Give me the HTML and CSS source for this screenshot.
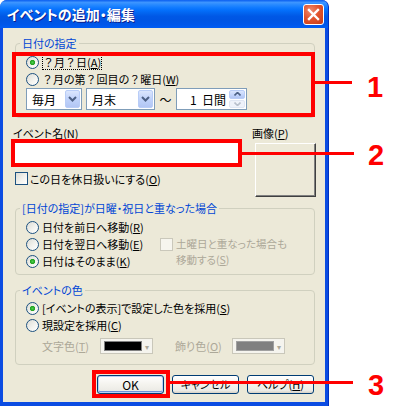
FILE: index.html
```html
<!DOCTYPE html>
<html lang="ja">
  <head>
    <meta charset="UTF-8" />
    <meta name="viewport" content="width=device-width, initial-scale=1.0" />
    <title>イベントの追加・編集</title>
    <link rel="stylesheet" href="styles.css">
  </head>
  <body>
    <div class="screen">
      <div class="window">
        <div class="titlebar">
          <span class="title">イベントの追加・編集</span>
          <span class="close">
            <svg width="21" height="21" viewBox="0 0 21 21">
              <path d="M6 6 L15 15 M15 6 L6 15" stroke="#fff" stroke-width="2.4" stroke-linecap="square" />
            </svg>
          </span>
        </div>

        <div class="client">
          <fieldset class="group g-date">
            <legend>日付の指定</legend>
            <div class="gbody">
              <div class="opt"><span class="radio on"></span><span class="focus"><span class="q">？</span>月<span class="q">？</span>日(<u>A</u>)</span></div>
              <div class="opt"><span class="radio"></span><span class="q">？</span>月の第<span class="q">？</span>回目の<span class="q">？</span>曜日(<u>W</u>)</div>
              <div class="combo-row">
                <div class="combo c-month">
                  <span>毎月</span>
                  <span class="drop">
                    <svg width="9" height="6" viewBox="0 0 9 6"><path d="M1 1 L4.5 4.5 L8 1" fill="none" stroke="#4d6185" stroke-width="2" /></svg>
                  </span>
                </div>
                <div class="combo c-day">
                  <span>月末</span>
                  <span class="drop">
                    <svg width="9" height="6" viewBox="0 0 9 6"><path d="M1 1 L4.5 4.5 L8 1" fill="none" stroke="#4d6185" stroke-width="2" /></svg>
                  </span>
                </div>
                <span class="tilde">～</span>
                <div class="spin">
                  <span class="spin-val">1&nbsp;&nbsp;日間</span>
                  <span class="spin-btns">
                    <span class="sb up"><svg width="7" height="4" viewBox="0 0 7 4"><path d="M0.5 3.5 L3.5 0.5 L6.5 3.5" fill="none" stroke="#4d6185" stroke-width="1.6" /></svg></span>
                    <span class="sb down"><svg width="7" height="4" viewBox="0 0 7 4"><path d="M0.5 0.5 L3.5 3.5 L6.5 0.5" fill="none" stroke="#b8c0cc" stroke-width="1.6" /></svg></span>
                  </span>
                </div>
              </div>
            </div>
          </fieldset>

          <div class="name-row">
            <div class="name-col">
              <div class="lbl">イベント名(<u>N</u>)</div>
              <div class="textbox"></div>
              <div class="chk"><span class="box"></span>この日を休日扱いにする(<u>O</u>)</div>
            </div>
            <div class="pic-col">
              <div class="lbl">画像(<u>P</u>)</div>
              <div class="picbtn"></div>
            </div>
          </div>

          <fieldset class="group g-holiday">
            <legend>[日付の指定]が日曜・祝日と重なった場合</legend>
            <div class="gbody holiday-grid">
              <div class="opts">
                <div class="opt"><span class="radio"></span>日付を前日へ移動(<u>R</u>)</div>
                <div class="opt"><span class="radio"></span>日付を翌日へ移動(<u>E</u>)</div>
                <div class="opt"><span class="radio on"></span>日付はそのまま(<u>K</u>)</div>
              </div>
              <div class="chk disabled sat">
                <span class="box"></span>
                <span class="sat-text">
                  <span class="sat-line">土曜日と重なった場合も</span>
                  <span class="sat-line">移動する(<u>S</u>)</span>
                </span>
              </div>
            </div>
          </fieldset>

          <fieldset class="group g-color">
            <legend>イベントの色</legend>
            <div class="gbody">
              <div class="opt"><span class="radio on"></span>[イベントの表示]で設定した色を採用(<u>S</u>)</div>
              <div class="opt"><span class="radio"></span>現設定を採用(<u>C</u>)</div>
              <div class="color-row">
                <span class="clbl">文字色(<u>T</u>)</span>
                <div class="ccombo"><span class="swatch black"></span><span class="carrow">▾</span></div>
                <span class="clbl second">飾り色(<u>O</u>)</span>
                <div class="ccombo"><span class="swatch grey"></span><span class="carrow">▾</span></div>
              </div>
            </div>
          </fieldset>

          <div class="buttons">
            <button class="btn default">OK</button>
            <button class="btn">キャンセル</button>
            <button class="btn">ヘルプ(<u>H</u>)</button>
          </div>
        </div>
      </div>

      <!-- callouts drawn over the dialog -->
      <div class="mark mark-date"></div>
      <div class="lead lead-1"></div>
      <div class="num num-1">1</div>

      <div class="mark mark-name"></div>
      <div class="lead lead-2"></div>
      <div class="num num-2">2</div>

      <div class="mark mark-ok"></div>
      <div class="lead lead-3"></div>
      <div class="num num-3">3</div>
    </div>
  </body>
</html>
```

FILE: styles.css
```css
body {
  margin: 0;
  background: #fff;
  font-family: "Noto Sans CJK JP", "Noto Sans", sans-serif;
  font-size: 11px;
  font-feature-settings: "palt";
  color: #000;
}
u {
  text-decoration: underline;
  text-underline-offset: 1px;
}
.screen {
  position: relative;
  width: 400px;
  height: 406px;
  overflow: hidden;
}

/* window frame */
.window {
  width: 329px;
  height: 406px;
  box-sizing: border-box;
  padding: 0 3px 4px;
  background: #0b4ce2;
  border-right: 1px solid #0030c0;
  border-radius: 7px 7px 0 0;
  display: flex;
  flex-direction: column;
}
.titlebar {
  margin: 0 -3px;
  height: 28px;
  flex: none;
  display: flex;
  align-items: center;
  padding: 0 4px 0 7px;
  border-radius: 7px 7px 0 0;
  background: linear-gradient(
    to bottom,
    #0a5ef0 0%,
    #3d95ff 9%,
    #2a8bff 16%,
    #137cff 26%,
    #0470fc 36%,
    #0263ee 48%,
    #0058e6 58%,
    #0055e3 72%,
    #0057ea 88%,
    #005df4 100%
  );
}
.title {
  color: #fff;
  font-size: 14px;
  font-weight: bold;
  text-shadow: 1px 1px #0f1f8c;
}
.close {
  margin-left: auto;
  width: 21px;
  height: 21px;
  box-sizing: border-box;
  border: 1px solid #fff;
  border-radius: 3px;
  background: radial-gradient(circle at 35% 30%, #f08a6e 0%, #e2552f 45%, #c43a16 100%);
  display: flex;
  align-items: center;
  justify-content: center;
}
.close svg {
  margin: -1px;
}
.client {
  flex: 1;
  background: #ece9d8;
  display: flex;
  flex-direction: column;
}

/* group boxes */
.group {
  margin: 0 0 0 12px;
  padding: 0;
  width: 300px;
  box-sizing: border-box;
  min-width: 0;
  border: 1px solid #d0d0bf;
  border-radius: 4px;
}
.group legend {
  margin-left: 4px;
  padding: 0 2px;
  color: #0046d5;
  line-height: 14px;
}
.g-date {
  margin-top: 8px;
}
.g-date .gbody {
  padding: 4px 0 7px 10px;
}
.g-holiday {
  margin-top: 4px;
}
.g-holiday .gbody {
  padding: 4px 0 4px 10px;
}
.g-color {
  margin-top: 8px;
}
.g-color .gbody {
  padding: 3px 0 10px 10px;
}

.opt {
  display: flex;
  align-items: center;
  height: 17px;
  line-height: 17px;
  white-space: nowrap;
}
.q {
  font-feature-settings: normal;
}
.radio {
  width: 13px;
  height: 13px;
  box-sizing: border-box;
  flex: none;
  margin-right: 3px;
  border: 1px solid #1c5180;
  border-radius: 50%;
  background: linear-gradient(135deg, #dcdcd5 0%, #f4f4f0 60%, #fff 100%);
}
.radio.on {
  background: radial-gradient(circle, #4dd14d 0, #21a121 2.2px, transparent 3px),
    linear-gradient(135deg, #dcdcd5 0%, #f4f4f0 60%, #fff 100%);
}
.focus {
  outline: 1px dotted #000;
  outline-offset: -1px;
  padding: 0 1px;
  line-height: 15px;
}

/* combo boxes */
.combo-row {
  display: flex;
  align-items: center;
  height: 22px;
  font-size: 12px;
}
.combo {
  height: 22px;
  box-sizing: border-box;
  border: 1px solid #7f9db9;
  background: #fff;
  display: flex;
  align-items: center;
  padding-left: 5px;
}
.c-month {
  width: 56px;
}
.c-day {
  width: 69px;
  margin-left: 4px;
}
.drop {
  margin-left: auto;
  margin-right: 1px;
  width: 15px;
  height: 18px;
  box-sizing: border-box;
  border: 1px solid #b9cdf7;
  border-radius: 2px;
  background: linear-gradient(to bottom, #dbe6fd 0%, #c1d3fb 50%, #b2c6f4 100%);
  display: flex;
  align-items: center;
  justify-content: center;
}
.tilde {
  width: 21px;
  text-align: center;
}
.spin {
  width: 71px;
  height: 22px;
  box-sizing: border-box;
  border: 1px solid #7f9db9;
  background: #fff;
  display: flex;
  align-items: center;
}
.spin-val {
  margin-left: auto;
  margin-right: 3px;
}
.spin-btns {
  width: 16px;
  height: 18px;
  margin-right: 1px;
  display: flex;
  flex-direction: column;
  gap: 1px;
}
.sb {
  flex: 1;
  box-sizing: border-box;
  border: 1px solid #b9cdf7;
  border-radius: 2px;
  background: linear-gradient(to bottom, #dbe6fd 0%, #c1d3fb 60%, #b2c6f4 100%);
  display: flex;
  align-items: center;
  justify-content: center;
}
.sb.down {
  border-color: #dfe6f3;
  background: #eef2fa;
}

/* name and picture */
.name-row {
  display: flex;
  margin-top: 8px;
}
.name-col {
  width: 226px;
  margin-left: 10px;
}
.lbl {
  line-height: 14px;
  white-space: nowrap;
}
.textbox {
  margin: 2px 0 0 1px;
  width: 225px;
  height: 22px;
  box-sizing: border-box;
  border: 1px solid #7f9db9;
  background: #fff;
}
.chk {
  display: flex;
  align-items: center;
  height: 17px;
  margin-top: 6px;
  margin-left: 2px;
  white-space: nowrap;
}
.box {
  width: 13px;
  height: 13px;
  box-sizing: border-box;
  flex: none;
  margin-right: 2px;
  border: 1px solid #1c5180;
  background: linear-gradient(135deg, #dcdcd5 0%, #f4f4f0 60%, #fff 100%);
}
.pic-col {
  margin-left: 13px;
}
.picbtn {
  margin: 3px 0 0 3px;
  width: 61px;
  height: 54px;
  box-sizing: border-box;
  border: 1px solid;
  border-color: #fff #404040 #404040 #fff;
  box-shadow: inset -1px -1px #808080;
  background: #ece9d8;
}

/* holiday group */
.holiday-grid {
  display: flex;
}
.opts {
  width: 134px;
}
.chk.sat {
  height: auto;
  align-items: flex-start;
  margin: 17px 0 0 0;
}
.sat-text {
  display: flex;
  flex-direction: column;
}
.sat-line {
  line-height: 15.5px;
  font-size: 10.5px;
}
.chk.disabled {
  color: #aca899;
}
.chk.disabled .box {
  border-color: #cac8bb;
  background: #f6f5ee;
  margin-top: 2px;
  margin-right: 3px;
}

/* color group */
.color-row {
  display: flex;
  align-items: center;
  height: 16px;
  margin-top: 4px;
  padding-left: 16px;
  color: #aca899;
}
.clbl {
  width: 58px;
  white-space: nowrap;
}
.clbl.second {
  margin-left: 22px;
  width: 57px;
}
.ccombo {
  width: 53px;
  height: 16px;
  box-sizing: border-box;
  border: 1px solid #c9c7ba;
  background: #f5f4ee;
  display: flex;
  align-items: center;
  padding-left: 3px;
}
.swatch {
  width: 38px;
  height: 10px;
  box-sizing: border-box;
  border: 1px solid #808080;
}
.swatch.black {
  background: #000;
}
.swatch.grey {
  background: #808080;
  border-color: #a0a0a0;
}
.carrow {
  margin-left: auto;
  width: 10px;
  text-align: center;
  font-size: 8px;
  color: #aca899;
}

/* dialog buttons */
.buttons {
  display: flex;
  justify-content: flex-end;
  gap: 8px;
  margin-top: 10px;
  padding-right: 11px;
}
.btn {
  width: 67px;
  height: 19px;
  padding: 0;
  border: 1px solid #003c74;
  border-radius: 3px;
  background: linear-gradient(to bottom, #fff 0%, #f4f3ee 50%, #ecebe6 85%, #d6d0c5 100%);
  font-family: inherit;
  font-size: 11px;
  font-feature-settings: "palt";
  color: #000;
  line-height: 15px;
}
.btn.default {
  font-size: 12px;
  box-shadow: inset 0 0 0 1px #b9d1f6, inset 0 -1px 0 1px #6f92d8;
}

/* callouts */
.mark {
  position: absolute;
  box-sizing: border-box;
  border: 4px solid #f00;
}
.mark-date {
  left: 12px;
  top: 52px;
  width: 303px;
  height: 65px;
}
.mark-name {
  left: 11px;
  top: 139px;
  width: 231px;
  height: 28px;
}
.mark-ok {
  left: 92px;
  top: 370px;
  width: 78px;
  height: 28px;
}
.lead {
  position: absolute;
  height: 3px;
  background: #f00;
}
.lead-1 {
  left: 315px;
  top: 81px;
  width: 37px;
}
.lead-2 {
  left: 242px;
  top: 152px;
  width: 112px;
}
.lead-3 {
  left: 170px;
  top: 381px;
  width: 183px;
}
.num {
  position: absolute;
  font-family: "Liberation Sans", Arial, sans-serif;
  font-weight: bold;
  font-size: 29px;
  line-height: 29px;
  color: #f00;
}
.num-1 {
  left: 367px;
  top: 73px;
}
.num-2 {
  left: 368px;
  top: 141px;
}
.num-3 {
  left: 368px;
  top: 371px;
}
```
